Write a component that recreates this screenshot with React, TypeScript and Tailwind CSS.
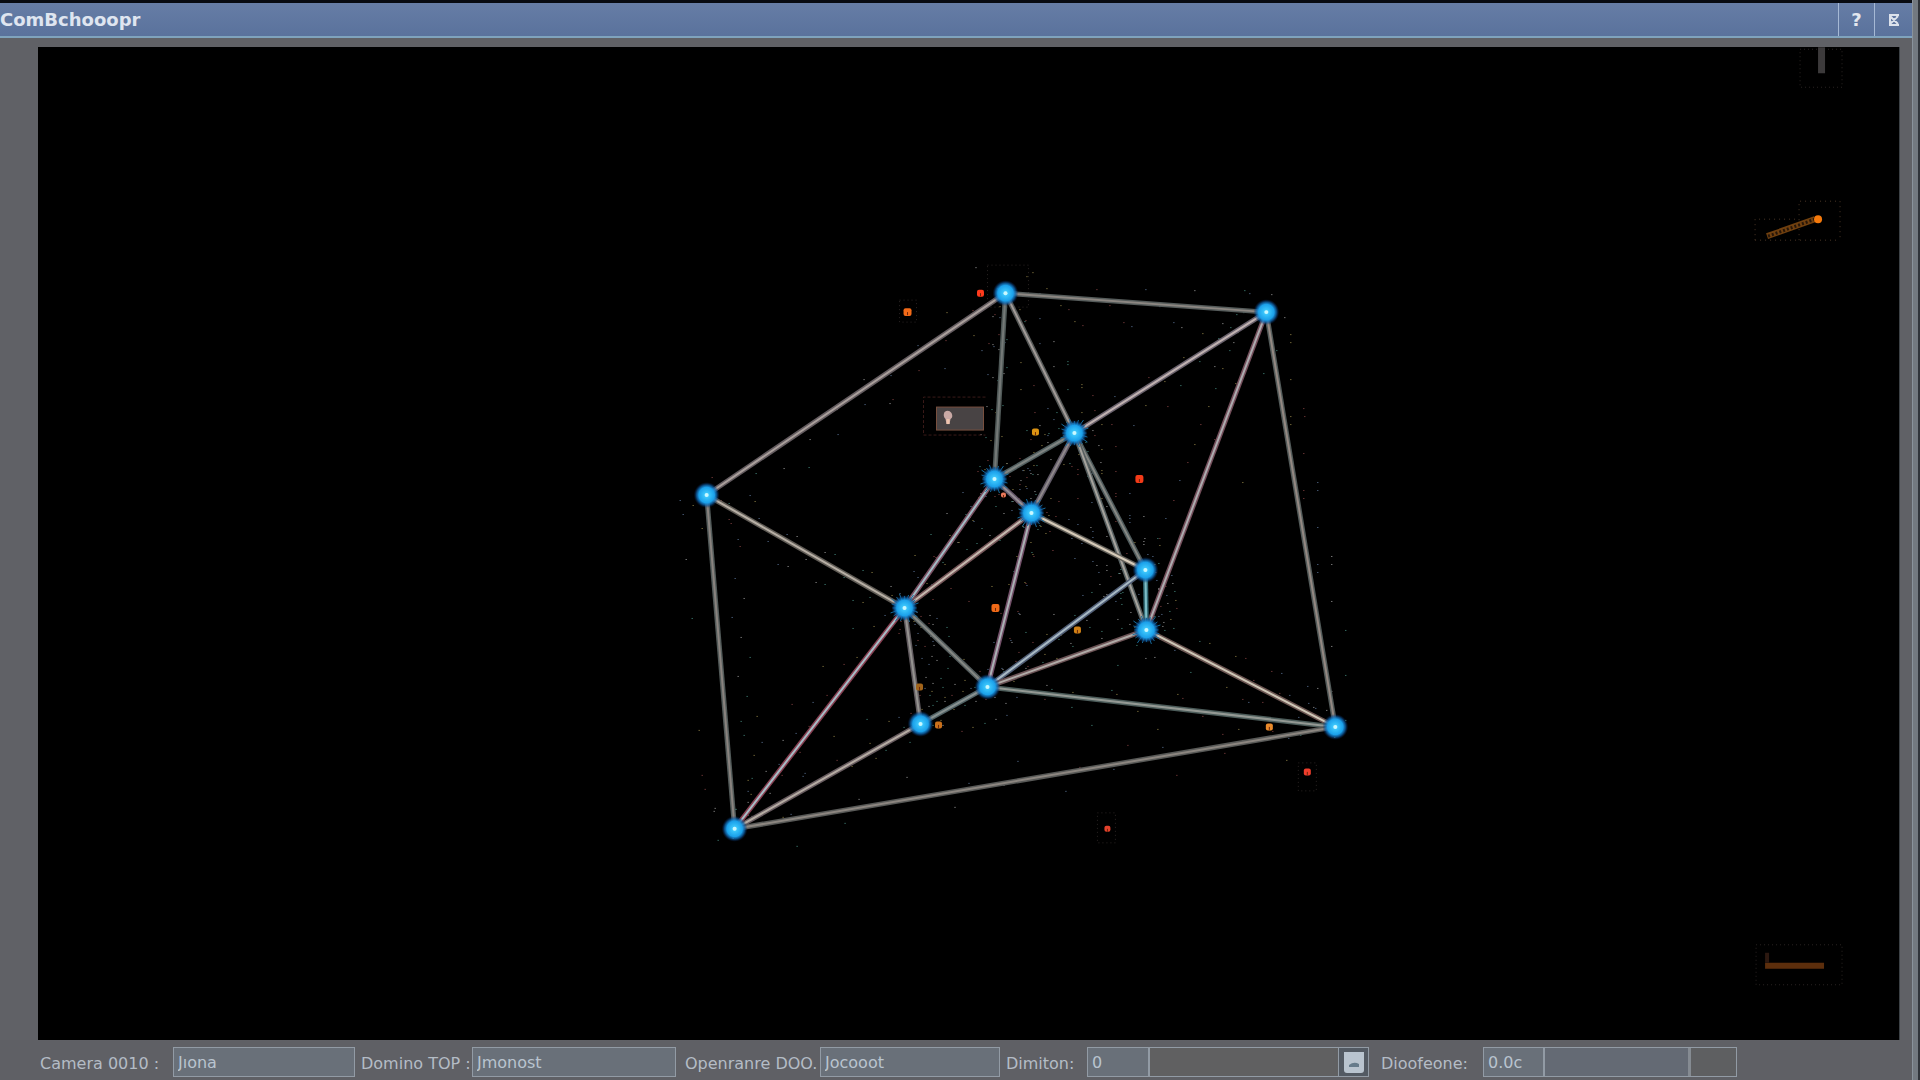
import React from "react";

type Point = [number, number];

const nodes: Record<string, Point> = {
  a: [968, 246],
  b: [1229, 265],
  c: [669, 448],
  d: [1037, 386],
  e: [957, 432],
  f: [994, 466],
  g: [1108, 523],
  h: [1109, 583],
  i: [867, 561],
  j: [950, 640],
  k: [883, 677],
  l: [1298, 680],
  m: [697, 782],
};

/* from, to, rim colour, core colour */
const edges: [string, string, string, string][] = [
  ["a", "b", "#565c5b", "#8c8782"],
  ["a", "c", "#645c60", "#aaa09c"],
  ["a", "e", "#4f5857", "#747977"],
  ["a", "d", "#575a59", "#a19a97"],
  ["b", "d", "#69616c", "#c0b2b1"],
  ["b", "h", "#744f5b", "#adacaf"],
  ["b", "l", "#545c5b", "#948983"],
  ["c", "i", "#5f5b55", "#b7afa5"],
  ["c", "m", "#535b5a", "#89837f"],
  ["d", "e", "#536061", "#818583"],
  ["d", "f", "#615a67", "#8f898b"],
  ["d", "g", "#4f5b5c", "#878884"],
  ["d", "h", "#565f60", "#a6a39d"],
  ["e", "f", "#65586a", "#969095"],
  ["e", "i", "#7a5062", "#a3bdc6"],
  ["f", "i", "#76575a", "#c6bab0"],
  ["f", "j", "#735069", "#aab1b4"],
  ["f", "g", "#63605a", "#d6cbb9"],
  ["g", "h", "#356c77", "#7ebdc7"],
  ["g", "j", "#515e76", "#a9bac4"],
  ["h", "j", "#6c5356", "#b0aba7"],
  ["h", "l", "#6c5652", "#cec7b7"],
  ["i", "m", "#873f51", "#a7bdc6"],
  ["i", "k", "#625c60", "#959390"],
  ["i", "j", "#545d5e", "#858783"],
  ["j", "k", "#526366", "#899291"],
  ["j", "l", "#4c5c5a", "#949994"],
  ["k", "m", "#675b5f", "#b5aca3"],
  ["l", "m", "#585957", "#8c8680"],
];

const markers: { at: Point; size: number; color: string }[] = [
  { at: [943, 246], size: 7, color: "#ff3a1c" },
  { at: [870, 265], size: 8, color: "#f26a18" },
  { at: [998, 385], size: 7, color: "#dc9313" },
  { at: [1102, 432], size: 8, color: "#f43b18" },
  { at: [966, 448], size: 5, color: "#e8785a" },
  { at: [958, 561], size: 8, color: "#ef6a18" },
  { at: [1040, 583], size: 7, color: "#cf8015" },
  { at: [882, 640], size: 7, color: "#a2641a" },
  { at: [901, 678], size: 7, color: "#c9701b" },
  { at: [1232, 680], size: 7, color: "#e98a2b" },
  { at: [1270, 725], size: 7, color: "#ee3d2c" },
  { at: [1070, 782], size: 6, color: "#e3412c" },
];

/* faint boxes around isolated items: x, y, width, height */
const frames = [
  [950, 218, 41, 42],
  [862, 253, 17, 22],
  [1261, 716, 18, 28],
  [1060, 766, 18, 30],
  [1763, 2, 42, 38],
  [1719, 898, 86, 40],
];

const speckColors = ["#a3a3a3", "#4b9488", "#9c8c4c", "#8f4848", "#617ba0"];

const specks = edges.flatMap(([from, to], n) =>
  Array.from({ length: 24 }, (_, s) => {
    const [x1, y1] = nodes[from];
    const [x2, y2] = nodes[to];
    const seed = n * 37 + s * 101;
    const t = ((seed * 53) % 97) / 97;
    return {
      x: Math.round(x1 + (x2 - x1) * t + ((seed * 29) % 61) - 30),
      y: Math.round(y1 + (y2 - y1) * t + ((seed * 43) % 53) - 26),
      color: speckColors[seed % 5],
    };
  }),
);

const rays = Array.from({ length: 20 }, (_, n) => {
  const angle = (n * Math.PI) / 10;
  const reach = 12 + ((n * 7) % 5);
  return `M0 0L${Math.round(Math.cos(angle) * reach)} ${Math.round(Math.sin(angle) * reach)}`;
}).join("");

const spiky = ["d", "f", "h", "i", "e"];

function Network() {
  return (
    <svg
      viewBox="0 0 1862 993"
      preserveAspectRatio="xMidYMid meet"
      className="h-full w-full"
      role="img"
      aria-label="Node network"
    >
      <defs>
        <radialGradient id="glow">
          <stop offset="0" stopColor="#8aeaff" />
          <stop offset="0.2" stopColor="#39c4fb" />
          <stop offset="0.6" stopColor="#1ba0ea" />
          <stop offset="0.78" stopColor="#0e66b0" stopOpacity="0.75" />
          <stop offset="1" stopColor="#06245c" stopOpacity="0" />
        </radialGradient>
      </defs>
      {specks.map((p, n) => (
        <rect key={n} x={p.x} y={p.y} width="1" height="1" fill={p.color} />
      ))}
      {frames.map(([x, y, w, h]) => (
        <rect
          key={`${x}-${y}`}
          x={x}
          y={y}
          width={w}
          height={h}
          fill="none"
          stroke="#2a2423"
          strokeDasharray="1 3"
        />
      ))}
      {edges.map(([from, to, rim, core]) => {
        const [x1, y1] = nodes[from];
        const [x2, y2] = nodes[to];
        return (
          <g key={from + to}>
            <line x1={x1} y1={y1} x2={x2} y2={y2} stroke={rim} strokeWidth="5" />
            <line x1={x1} y1={y1} x2={x2} y2={y2} stroke={core} strokeWidth="2" />
          </g>
        );
      })}
      {markers.map(({ at: [x, y], size, color }) => (
        <g key={`${x}-${y}`}>
          <rect x={x - size / 2} y={y - size / 2} width={size} height={size} rx="2" fill={color} />
          <path d={`M${x} ${y}v3`} stroke="#6b2408" strokeWidth="1" />
        </g>
      ))}
      {Object.entries(nodes).map(([id, [x, y]]) => (
        <g key={id} transform={`translate(${x} ${y})`}>
          {spiky.includes(id) && <path d={rays} stroke="#176da0" strokeWidth="1" />}
          <circle r="13" fill="url(#glow)" />
          <circle r="2" fill="#c9f8ff" />
        </g>
      ))}

      {/* label plate */}
      <path d="M948 350H886V388H948" fill="none" stroke="#3a1a18" strokeDasharray="3 2" />
      <rect x="899" y="360" width="47" height="23" fill="#484344" stroke="#79503f" strokeWidth="1" />
      <path d="M907 365q4-3 7 1q2 4-1 6l-1 5h-3l-1-5q-3-3-1-7z" fill="#c9a9a5" />
      <path d="M909 372h3v5h-3z" fill="#efc4ad" />

      {/* stub at the upper edge */}
      <rect x="1781" y="0" width="7" height="26" fill="#3c3a3b" />

      {/* tethered beacon */}
      <path d="M1762 193v-39h41v39M1718 193v-21h44M1718 193h85" fill="none" stroke="#4a3626" strokeDasharray="1 4" />
      <path d="M1730 189L1778 172" stroke="#70400f" strokeWidth="6" />
      <path d="M1731 189L1778 172" stroke="#26160a" strokeWidth="3" strokeDasharray="2 2" />
      <circle cx="1781" cy="172" r="4" fill="#f5790b" />

      {/* lower gauge */}
      <path d="M1728 916h59v6h-59z" fill="#5c2e0c" />
      <path d="M1728 906h4v10h-4z" fill="#2c1810" />
    </svg>
  );
}

const box =
  "h-[30px] min-w-0 border border-[#929ba5] bg-[#697079] px-1 text-base text-[#b9c4cf] outline-none";

function TextField({
  id,
  label,
  value,
  labelClass,
  inputClass,
}: {
  id: string;
  label: string;
  value: string;
  labelClass: string;
  inputClass: string;
}) {
  return (
    <div className="flex items-center">
      <label htmlFor={id} className={`shrink-0 pt-1 whitespace-nowrap ${labelClass}`}>
        {label}
      </label>
      <input id={id} type="text" defaultValue={value} className={`${box} ${inputClass}`} />
    </div>
  );
}

export default function App() {
  return (
    <div className="flex h-screen overflow-hidden bg-[#606166] font-['DejaVu_Sans',sans-serif]">
      <div className="flex min-w-0 flex-1 flex-col">
        <header className="flex h-[38px] shrink-0 border-t-3 border-b-2 border-t-[#080b12] border-b-[#7fa3bd] bg-linear-to-b from-[#667da6] to-[#5a729c]">
          <h1 className="flex flex-1 items-center text-lg font-bold text-[#dfe5f0]">
            ComBchooopr
          </h1>
          <button
            type="button"
            aria-label="Help"
            className="flex w-9 items-center justify-center border-l border-[#a6b9d5] text-lg font-bold text-[#e3e7ee]"
          >
            ?
          </button>
          <button
            type="button"
            aria-label="Close"
            className="flex w-[38px] items-center justify-center border-l border-[#a6b9d5]"
          >
            <svg viewBox="0 0 12 12" className="size-3">
              <path d="M1 1h10M1 11h10M2 1v10M2 2l8 8M10 2l-8 8" fill="none" stroke="#dce2ec" strokeWidth="2" />
              <path d="M5 3h3" stroke="#5871a0" strokeWidth="1" />
            </svg>
          </button>
        </header>

        <main className="mt-[9px] mr-3 ml-[38px] min-h-0 flex-1 border-r border-[#3c4145] bg-black">
          <Network />
        </main>

        <form className="flex h-10 shrink-0 items-center bg-[#5f6065] pt-1 pl-10 text-base text-[#b4bcc5]">
          <TextField id="camera" label="Camera 0010 :" value="Jıona" labelClass="w-[133px]" inputClass="w-[182px]" />
          <TextField id="domino" label="Domino TOP :" value="Jmonost" labelClass="w-[117px] pl-[6px]" inputClass="w-[204px]" />
          <TextField id="operator" label="Openranre DOO." value="Jocooot" labelClass="w-[144px] pl-[9px]" inputClass="w-[180px]" />

          <div className="flex items-center">
            <label htmlFor="dim" className="w-[87px] shrink-0 pt-1 pl-[6px] whitespace-nowrap">
              Dimiton:
            </label>
            <input id="dim" type="text" defaultValue="0" className={`${box} w-[62px]`} />
            <input
              type="range"
              aria-label="Dimiton level"
              className="h-[30px] w-[190px] appearance-none border border-[#929ba5] bg-[#606061] outline-none [&::-webkit-slider-thumb]:appearance-none"
            />
            <button
              type="button"
              aria-label="Save"
              className="flex h-[30px] w-[30px] items-center justify-center border border-l-0 border-[#929ba5] bg-[#535a63]"
            >
              <svg viewBox="0 0 20 22" className="h-[22px] w-5">
                <path d="M0 1h20v18q0 3-3 3H3q-3 0-3-3z" fill="#b9c4cf" />
                <path d="M5 14q5-4 10-1v3H5z" fill="#667b8b" />
              </svg>
            </button>
          </div>

          <div className="flex items-center">
            <label htmlFor="scale" className="w-[114px] shrink-0 pt-1 pl-3 whitespace-nowrap">
              Dioofeone:
            </label>
            <input id="scale" type="text" defaultValue="0.0c" className={`${box} w-[61px]`} />
            <input
              type="range"
              aria-label="Dioofeone level"
              defaultValue={100}
              className="h-[30px] w-[193px] appearance-none border border-[#929ba5] bg-[#646a74] outline-none [&::-webkit-slider-thumb]:h-7 [&::-webkit-slider-thumb]:w-12 [&::-webkit-slider-thumb]:appearance-none [&::-webkit-slider-thumb]:border-l-3 [&::-webkit-slider-thumb]:border-[#858b92] [&::-webkit-slider-thumb]:bg-[#5e5f61]"
            />
          </div>
        </form>
      </div>
      <div className="w-2 shrink-0 border-r-2 border-l border-r-[#30343a] border-l-[#89929b] bg-[#737980]" />
    </div>
  );
}
